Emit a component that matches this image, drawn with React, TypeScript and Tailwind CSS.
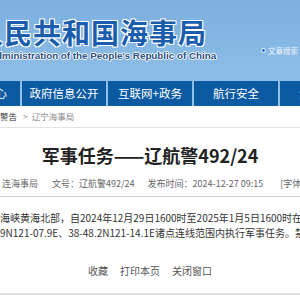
import React from "react";

const navItems = ["新闻中心", "政府信息公开", "互联网+政务", "航行安全", "海事服务"];

const App = () => {
  return (
    <div className="w-[300px] h-[300px] overflow-hidden bg-white font-['Noto_Sans_CJK_SC',sans-serif]">
      {/* 顶部横幅 */}
      <header className="h-[106px] bg-gradient-to-b from-[#7cafdf] to-[#93c3eb] flex flex-col">
        <div className="h-[81px] flex justify-between">
          <div className="pt-[15px] whitespace-nowrap">
            <div className="-ml-[25px] text-[28px] leading-[34px] font-bold tracking-[1px] text-[#1a5dac] [text-shadow:1px_1px_0_#fff,-1px_-1px_0_#fff,1px_-1px_0_#fff,-1px_1px_0_#fff]">
              人民共和国海事局
            </div>
            <div className="-ml-[11px] mt-[1px] text-[9.8px] leading-[12px] font-bold text-[#2b4f86] font-['Liberation_Sans',sans-serif] [text-shadow:1px_0_0_#fff,-1px_0_0_#fff,0_1px_0_#fff,0_-1px_0_#fff]">
              Administration of the People's Republic of China
            </div>
          </div>
          <div className="pt-[45px] pr-[2px] flex items-start gap-[2px] text-[7.5px] leading-[12px] text-white whitespace-nowrap">
            <span className="mt-[3px] w-[5px] h-[5px] rounded-full bg-[#1a6ee0] border border-white" />
            <span className="text-[#eef4fb]">文章搜索</span>
          </div>
        </div>
        <nav className="h-[25px] flex gap-[2px] -ml-[64px]">
          {navItems.map((item, i) => (
            <div
              key={item}
              className={`w-[84px] shrink-0 bg-[#0b5aa2] text-white text-[11.5px] flex items-center ${
                i === 0 ? "justify-end pr-[13px]" : "justify-center"
              }`}
            >
              {item}
            </div>
          ))}
        </nav>
      </header>

      {/* 面包屑 */}
      <div className="h-[22px] border-b border-[#e3e3e3] flex items-center text-[8.5px] whitespace-nowrap">
        <span className="text-[#333]">警告</span>
        <span className="ml-[6px] text-[#999]">&gt;</span>
        <span className="ml-[4px] text-[#888]">辽宁海事局</span>
      </div>

      <main>
        <h1 className="pt-[16px] text-center text-[18px] leading-[22px] font-bold text-[#222] whitespace-nowrap">
          军事任务——辽航警492/24
        </h1>
        <div className="mt-[11px] pb-[5px] border-b border-[#d0d0d0] flex items-center text-[9px] leading-[14px] text-[#666] whitespace-nowrap pl-[2px]">
          <span>连海事局</span>
          <span className="ml-[14px]">文号：辽航警492/24</span>
          <span className="ml-[13px]">发布时间：2024-12-27 09:15</span>
          <span className="ml-[17px]">[字体：</span>
          <span className="ml-[12px]">大</span>
        </div>

        <div className="mt-[13px] text-[10px] leading-[15px] text-[#333] whitespace-nowrap">
          <p>海峡黄海北部，自2024年12月29日1600时至2025年1月5日1600时在辽</p>
          <p>9N121-07.9E、38-48.2N121-14.1E诸点连线范围内执行军事任务。禁止</p>
        </div>

        <div className="mt-[24px] flex justify-center gap-[12px] text-[10px] leading-[14px] text-[#555]">
          <span>收藏</span>
          <span>打印本页</span>
          <span>关闭窗口</span>
        </div>
        <div className="mt-[15px] h-[2px] bg-[#dedede]" />
      </main>
    </div>
  );
};

export default App;
